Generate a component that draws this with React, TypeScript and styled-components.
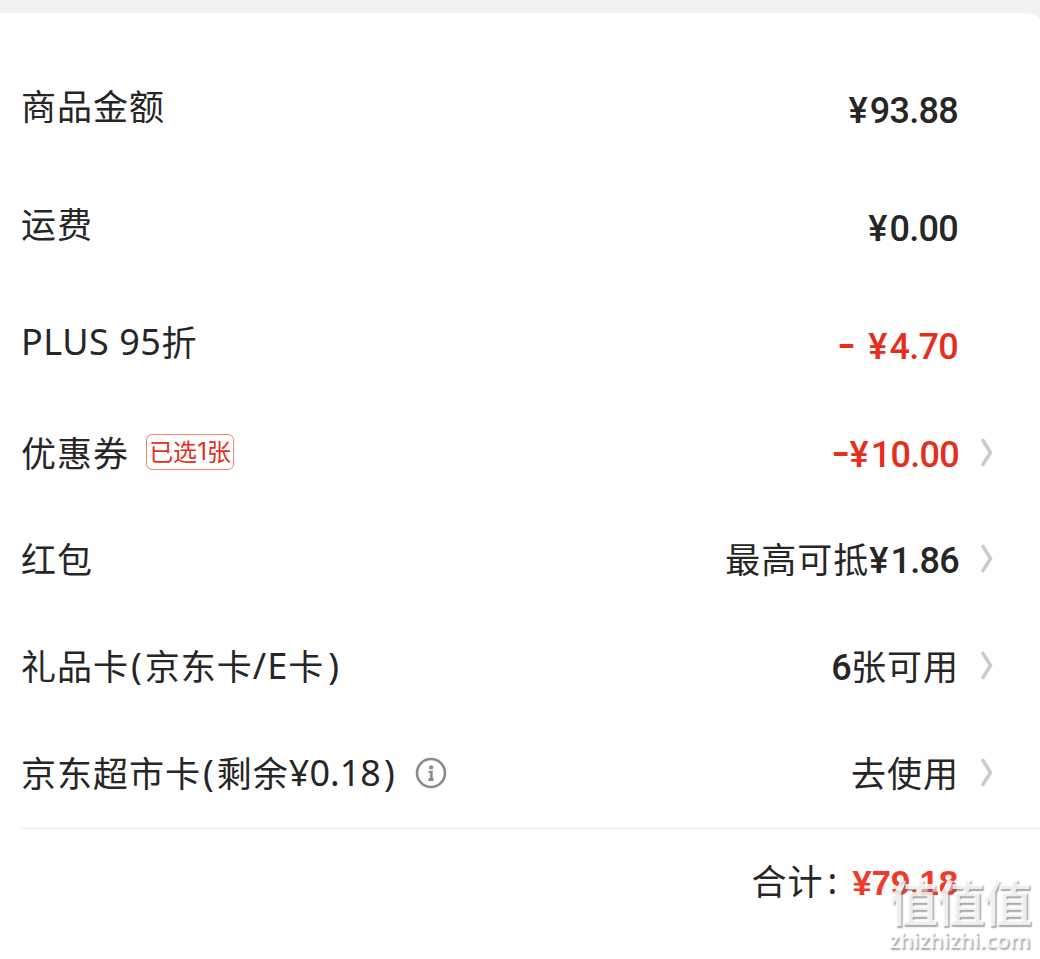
import React from "react";
import styled, { createGlobalStyle } from "styled-components";

const GlobalStyle = createGlobalStyle`
  * { box-sizing: border-box; }
  html, body { margin: 0; padding: 0; background: #f1f1f1; }
  body { overflow: hidden; }
`;

const Page = styled.div`
  position: relative;
  width: 1040px;
  height: 959px;
  padding-top: 13px;
  overflow: hidden;
  background: #f1f1f1;
  color: #262626;
  font-family: "Noto Sans", "Noto Sans CJK SC", sans-serif;
  font-size: 35px;
  line-height: 48px;
  white-space: nowrap;
`;

const Card = styled.main`
  height: 946px;
  padding-top: 35px;
  background: #fff;
  border-top-right-radius: 18px 8px;
`;

const Row = styled.div<{ $height: number }>`
  display: flex;
  align-items: center;
  justify-content: space-between;
  height: ${(p) => p.$height}px;
  padding: 0 46px 0 21px;
`;

const Label = styled.div`
  display: flex;
  align-items: center;
`;

const Value = styled.div<{ $arrow?: boolean; $red?: boolean; $drop?: number }>`
  display: flex;
  align-items: center;
  padding-right: ${(p) => (p.$arrow ? 0 : 36)}px;
  padding-top: ${(p) => p.$drop ?? 0}px;
  color: ${(p) => (p.$red ? "#e62e1c" : "inherit")};
`;

const Han = styled.span`
  padding-bottom: 5px;
  font-family: "Noto Sans CJK SC", sans-serif;
  letter-spacing: 1px;
`;

const Latin = styled.span<{ $spacing?: number; $before?: number; $after?: number }>`
  padding-bottom: 3px;
  margin-left: ${(p) => p.$before ?? 0}px;
  margin-right: ${(p) => p.$after ?? 0}px;
  font-family: "Noto Sans", sans-serif;
  font-size: 36px;
  letter-spacing: ${(p) => p.$spacing ?? 0}px;
`;

const Price = styled.span`
  font-family: Roboto, sans-serif;
  font-weight: 500;
  font-size: 36px;
  letter-spacing: -0.7px;
`;

const Yen = styled.span`
  margin-right: 2.8px;
`;

const Minus = styled.span<{ $gap: number }>`
  margin: -5px ${(p) => p.$gap}px 0 0;
  font-family: Inter, sans-serif;
  font-weight: 500;
  font-size: 42px;
`;

const Total = styled.span`
  margin: 2px 0 0 15px;
  color: #f03a2a;
  font-family: "Liberation Sans", Arial, sans-serif;
  font-weight: 700;
  font-size: 35px;
  letter-spacing: -0.2px;
`;

const Tag = styled.span`
  display: flex;
  align-items: center;
  justify-content: center;
  width: 88px;
  height: 36px;
  margin: -5px 0 0 17px;
  padding-bottom: 3px;
  border: 1px solid #ec8479;
  border-radius: 6px;
  color: #e62e1c;
  font-family: "Noto Sans CJK SC", sans-serif;
  font-size: 24px;
  line-height: 34px;
`;

const TagCount = styled.span`
  padding-top: 2px;
  font-family: Inter, sans-serif;
`;

const ArrowIcon = styled.svg`
  width: 14px;
  height: 30px;
  margin: -4px 0 0 21px;
`;

const InfoIcon = styled.svg`
  width: 32px;
  height: 32px;
  margin: -3px 0 0 20px;
`;

const Divider = styled.div`
  height: 1px;
  margin-left: 21px;
  background: #ececec;
`;

const Watermark = styled.div`
  position: absolute;
  left: 889px;
  top: 873px;
  display: flex;
  flex-direction: column;
  color: rgba(255, 255, 255, 0.8);
  text-shadow: 1.5px 1.5px 1.5px rgba(110, 110, 110, 0.6);
`;

const WatermarkName = styled.span`
  font-family: "Noto Sans CJK SC", sans-serif;
  font-weight: 700;
  font-size: 49px;
  line-height: 54px;
  letter-spacing: -2px;
`;

const WatermarkSite = styled.span`
  font-family: "Noto Sans", sans-serif;
  font-weight: 600;
  font-size: 21.5px;
  line-height: 26px;
`;

const Arrow = () => (
  <ArrowIcon viewBox="0 0 14 30" fill="none" stroke="#cbcbcb" strokeWidth="3.6" strokeLinecap="round">
    <path d="M3 2.5 L10.5 14.5 L3 26.5" />
  </ArrowIcon>
);

const Info = () => (
  <InfoIcon viewBox="0 0 32 32" fill="none" stroke="#8a8a8a" strokeWidth="2.6">
    <circle cx="16" cy="16" r="14" />
    <circle cx="16.2" cy="10.4" r="2.1" fill="#8a8a8a" stroke="none" />
    <path d="M13.6 15 H16.4 V22.6 M13.4 22.6 H18.6" />
  </InfoIcon>
);

const Amount = ({ value }: { value: string }) => (
  <Price><Yen>¥</Yen>{value}</Price>
);

export default function App() {
  return (
    <Page>
      <GlobalStyle />
      <Card>
        <Row $height={118}>
          <Label><Han>商品金额</Han></Label>
          <Value $drop={7}><Amount value="93.88" /></Value>
        </Row>
        <Row $height={118}>
          <Label><Han>运费</Han></Label>
          <Value $drop={7}><Amount value="0.00" /></Value>
        </Row>
        <Row $height={118}>
          <Label><Latin $spacing={0.5}>PLUS 95</Latin><Han>折</Han></Label>
          <Value $red $drop={7}><Minus $gap={12}>-</Minus><Amount value="4.70" /></Value>
        </Row>
        <Row $height={105}>
          <Label><Han>优惠券</Han><Tag>已选<TagCount>1</TagCount>张</Tag></Label>
          <Value $red $arrow><Minus $gap={-1}>-</Minus><Amount value="10.00" /><Arrow /></Value>
        </Row>
        <Row $height={107}>
          <Label><Han>红包</Han></Label>
          <Value $arrow><Han>最高可抵</Han><Amount value="1.86" /><Arrow /></Value>
        </Row>
        <Row $height={107}>
          <Label>
            <Han>礼品卡</Han><Latin $before={2} $after={3}>(</Latin><Han>京东卡</Han>
            <Latin $spacing={1}>/E</Latin><Han>卡</Han><Latin $before={4}>)</Latin>
          </Label>
          <Value $arrow><Price>6</Price><Han>张可用</Han><Arrow /></Value>
        </Row>
        <Row $height={107}>
          <Label>
            <Han>京东超市卡</Han><Latin $before={2} $after={3}>(</Latin><Han>剩余</Han>
            <Latin>¥0.18</Latin><Latin $before={3}>)</Latin><Info />
          </Label>
          <Value $arrow><Han>去使用</Han><Arrow /></Value>
        </Row>
        <Divider />
        <Row $height={106}>
          <span />
          <Value><Han>合计</Han><Latin $before={4}>:</Latin><Total>¥79.18</Total></Value>
        </Row>
      </Card>
      <Watermark>
        <WatermarkName>值值值</WatermarkName>
        <WatermarkSite>zhizhizhi.com</WatermarkSite>
      </Watermark>
    </Page>
  );
}
